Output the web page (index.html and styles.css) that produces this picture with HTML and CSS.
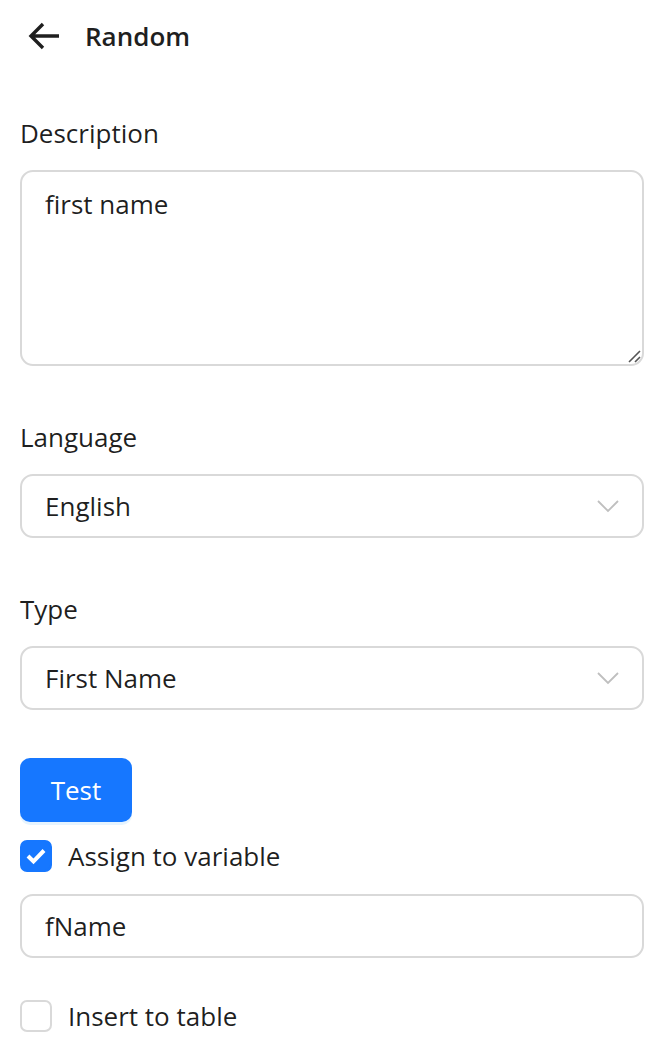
FILE: index.html
```html
<!DOCTYPE html>
<html>
<head>
<meta charset="utf-8">
<link rel="stylesheet" href="styles.css">
</head>
<body>
<div class="page">
  <header class="header">
    <svg class="back" width="34" height="30" viewBox="0 0 34 30"><path d="M32 15H4M16 3L4 15l12 12" fill="none" stroke="#1f1f1f" stroke-width="3.4" stroke-linecap="butt" stroke-linejoin="miter"/></svg>
    <span class="title">Random</span>
  </header>

  <div class="field first">
    <div class="label">Description</div>
    <div class="textarea">first name
      <svg class="grip" width="14" height="14" viewBox="0 0 14 14"><path d="M13 2L2 13M13 8L8 13" stroke="#555" stroke-width="1.6"/></svg>
    </div>
  </div>

  <div class="field">
    <div class="label">Language</div>
    <div class="select"><span>English</span>
      <svg class="chev" width="22" height="14" viewBox="0 0 22 14"><path d="M1 2l10 10L21 2" fill="none" stroke="#bfbfbf" stroke-width="1.8"/></svg>
    </div>
  </div>

  <div class="field">
    <div class="label">Type</div>
    <div class="select"><span>First Name</span>
      <svg class="chev" width="22" height="14" viewBox="0 0 22 14"><path d="M1 2l10 10L21 2" fill="none" stroke="#bfbfbf" stroke-width="1.8"/></svg>
    </div>
  </div>

  <div class="btnrow"><button class="btn">Test</button></div>

  <label class="check">
    <span class="box checked"><svg width="22" height="18" viewBox="0 0 22 18"><path d="M3 9l5.5 5.5L19 3.5" fill="none" stroke="#fff" stroke-width="4"/></svg></span>
    <span>Assign to variable</span>
  </label>

  <div class="input">fName</div>

  <label class="check last">
    <span class="box"></span>
    <span>Insert to table</span>
  </label>
</div>
</body>
</html>
```

FILE: styles.css
```css
* { box-sizing: border-box; }
html, body { margin: 0; padding: 0; background: #fff; }
body {
  font-family: "Open Sans", "Noto Sans", sans-serif;
  color: rgba(0,0,0,0.88);
  font-size: 26px;
}
.page { padding: 0 12px 0 20px; width: 656px; }
.header {
  display: flex;
  align-items: center;
  height: 76px;
  padding: 0 0 4px 7px;
}
.back { margin-right: 24px; }
.title { font-size: 26px; font-weight: 600; color: #1f1f1f; }
.field { margin-top: 51px; }
.field.first { margin-top: 37px; }
.label { height: 40px; line-height: 40px; margin-bottom: 17px; }
.textarea {
  position: relative;
  height: 196px;
  border: 2px solid #d9d9d9;
  border-radius: 13px;
  padding: 14px 23px;
  line-height: 36px;
}
.grip { position: absolute; right: 1px; bottom: 1px; }
.select, .input {
  height: 64px;
  border: 2px solid #d9d9d9;
  border-radius: 13px;
  padding: 0 23px;
  display: flex;
  align-items: center;
  justify-content: space-between;
}
.btnrow { margin-top: 48px; }
.btn {
  font-family: inherit;
  font-size: 26px;
  color: #fff;
  background: #1677ff;
  border: none;
  border-radius: 10px;
  height: 64px;
  width: 112px;
  box-shadow: 0 3px 0 rgba(5,145,255,0.1);
  padding: 0;
}
.check {
  display: flex;
  align-items: center;
  gap: 16px;
  height: 32px;
  margin-top: 18px;
}
.box {
  width: 32px;
  height: 32px;
  border: 2px solid #d9d9d9;
  border-radius: 7px;
  display: flex;
  align-items: center;
  justify-content: center;
}
.box.checked { background: #1677ff; border-color: #1677ff; }
.input { margin-top: 22px; justify-content: flex-start; }
.check.last { margin-top: 42px; }
```
